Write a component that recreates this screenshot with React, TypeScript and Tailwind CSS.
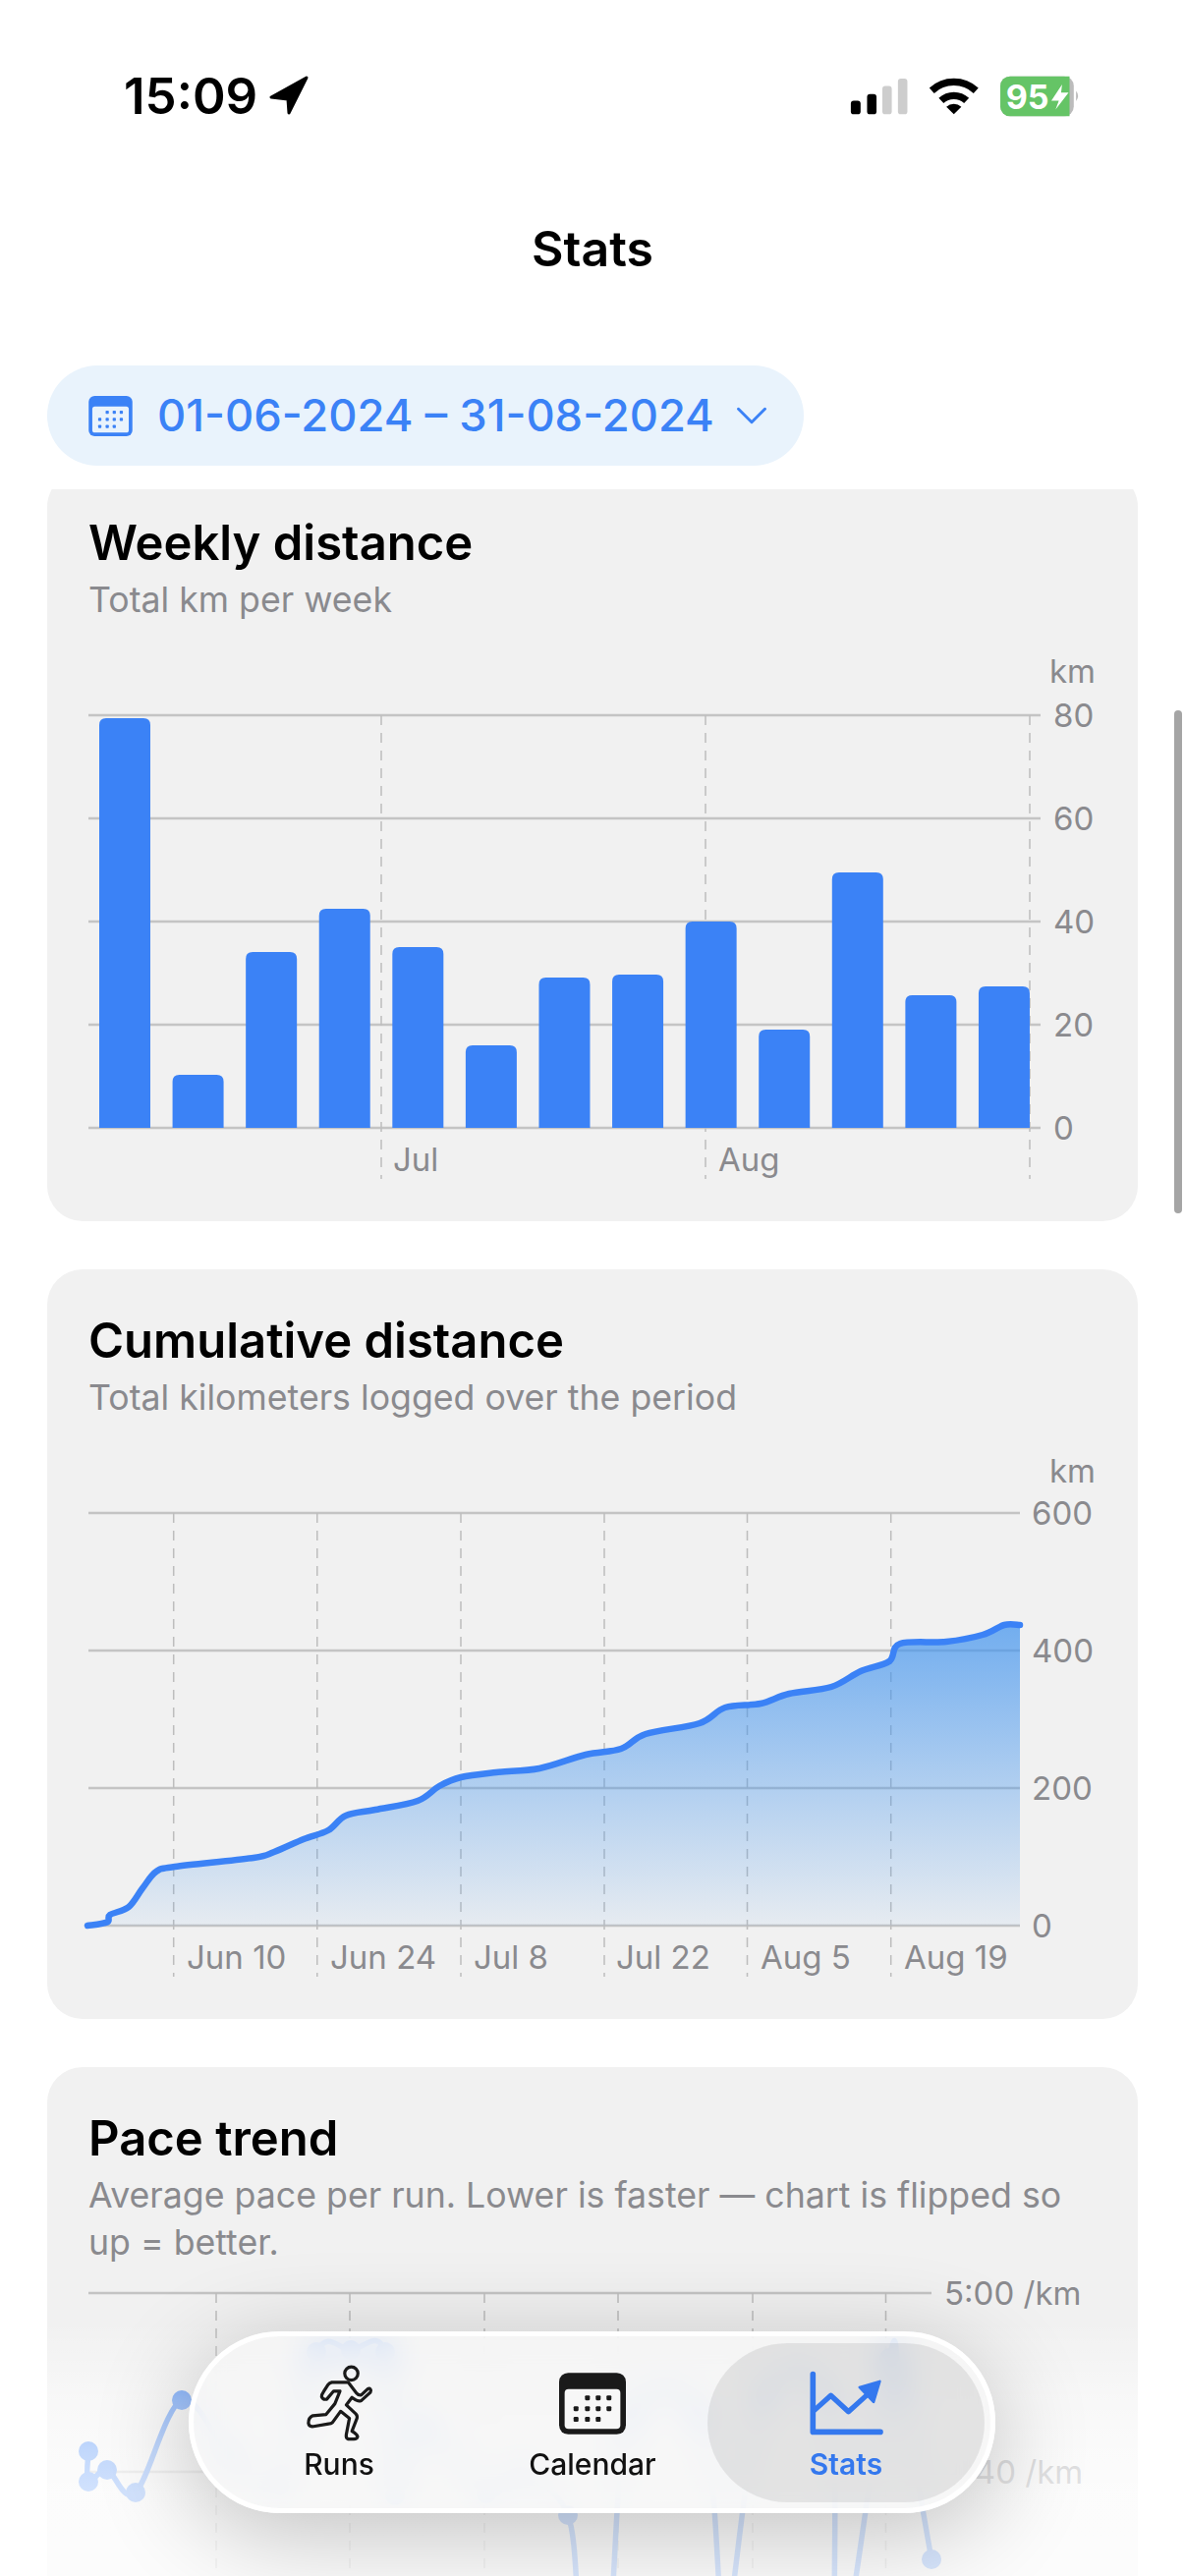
import { ChevronDown } from "lucide-react";

type Pt = [number, number];

const GRID = "#c4c4c4";
const DASH = "#bdbdbd";
const LABEL = "#8a8a8e";
const BLUE = "#3b82f6";

/** Catmull-Rom through the points, gives the soft line swift charts draws. */
function smooth(pts: Pt[]) {
  let d = `M${pts[0][0]} ${pts[0][1]}`;
  for (let i = 0; i < pts.length - 1; i++) {
    const a = pts[Math.max(i - 1, 0)];
    const b = pts[i];
    const c = pts[i + 1];
    const e = pts[Math.min(i + 2, pts.length - 1)];
    const c1x = b[0] + (c[0] - a[0]) / 6;
    const c1y = b[1] + (c[1] - a[1]) / 6;
    const c2x = c[0] - (e[0] - b[0]) / 6;
    const c2y = c[1] - (e[1] - b[1]) / 6;
    d += ` C${c1x} ${c1y} ${c2x} ${c2y} ${c[0]} ${c[1]}`;
  }
  return d;
}

const weeklyTops = [731, 1094, 969, 925, 964, 1064, 995, 992, 938, 1048, 888, 1013, 1004];

const cumulative: Pt[] = [
  [89, 1960], [109, 1956.5], [112, 1949], [131, 1941], [145, 1922], [159, 1905], [178, 1900],
  [258, 1891], [279, 1885], [309, 1872], [334, 1863], [352, 1848], [382, 1842], [425, 1833],
  [447, 1818], [469, 1809], [505, 1804], [549, 1800], [596, 1786], [632, 1780], [657, 1765],
  [712, 1754], [738, 1738], [774, 1734], [803, 1724], [846, 1717], [876, 1701], [905, 1691],
  [916, 1673], [963, 1671], [1000, 1664], [1022, 1654], [1038, 1654],
];

const pace: Pt[] = [
  [90, 2495], [90, 2526], [109, 2514], [138, 2537], [185, 2443], [235, 2500], [285, 2530],
  [322, 2394], [357, 2392], [392, 2394], [402, 2540], [430, 2470], [495, 2538], [530, 2520], [578, 2560],
  [592, 2680], [619, 2680], [641, 2460], [713, 2460], [735, 2680], [740, 2680], [778, 2440],
  [843, 2440], [850, 2680], [862, 2680], [905, 2400], [917, 2433], [948, 2605],
];

function Label({ x, y, children }: { x: number; y: number; children: React.ReactNode }) {
  return (
    <text x={x} y={y} dominantBaseline="central" fill={LABEL} fontSize={33}>
      {children}
    </text>
  );
}

function HLine({ y, x2 }: { y: number; x2: number }) {
  return <line x1={90} x2={x2} y1={y} y2={y} stroke={GRID} strokeWidth={2.5} />;
}

function VDash({ x, y1, y2 }: { x: number; y1: number; y2: number }) {
  return <line x1={x} x2={x} y1={y1} y2={y2} stroke={DASH} strokeWidth={1.5} strokeDasharray="10 8" />;
}

function WeeklyChart() {
  return (
    <svg viewBox="90 647 1024 553" className="block h-[553px] w-[1024px] overflow-visible">
      <Label x={1068} y={683}>km</Label>
      {[728, 833, 938, 1043, 1148].map((y) => <HLine key={y} y={y} x2={1059} />)}
      {[388, 718, 1048].map((x) => <VDash key={x} x={x} y1={728} y2={1200} />)}
      {weeklyTops.map((top, i) => {
        const x = 101 + i * 74.58;
        return (
          <path
            key={i}
            d={`M${x} 1148 V${top + 7} Q${x} ${top} ${x + 7} ${top} H${x + 45} Q${x + 52} ${top} ${x + 52} ${top + 7} V1148 Z`}
            fill={BLUE}
          />
        );
      })}
      <Label x={1072} y={728}>80</Label>
      <Label x={1072} y={833}>60</Label>
      <Label x={1072} y={938}>40</Label>
      <Label x={1072} y={1043}>20</Label>
      <Label x={1072} y={1148}>0</Label>
      <Label x={400} y={1180}>Jul</Label>
      <Label x={731} y={1180}>Aug</Label>
    </svg>
  );
}

function CumulativeChart() {
  const line = smooth(cumulative);
  return (
    <svg viewBox="90 1459 1024 553" className="block h-[553px] w-[1024px] overflow-visible">
      <defs>
        <linearGradient id="area" x1="0" y1="0" x2="0" y2="1">
          <stop offset="0" stopColor="#4093ee" stopOpacity={0.72} />
          <stop offset="1" stopColor="#4093ee" stopOpacity={0.06} />
        </linearGradient>
      </defs>
      <Label x={1068} y={1497}>km</Label>
      {[1540, 1680, 1820, 1960].map((y) => <HLine key={y} y={y} x2={1038} />)}
      {[176.7, 322.8, 469, 615, 760.5, 906.7].map((x) => <VDash key={x} x={x} y1={1540} y2={2012} />)}
      <path d={`${line} V1960 H89 Z`} fill="url(#area)" />
      <path d={line} fill="none" stroke={BLUE} strokeWidth={6.5} strokeLinecap="round" strokeLinejoin="round" />
      <Label x={1050} y={1540}>600</Label>
      <Label x={1050} y={1680}>400</Label>
      <Label x={1050} y={1820}>200</Label>
      <Label x={1050} y={1960}>0</Label>
      <Label x={190} y={1992}>Jun 10</Label>
      <Label x={336} y={1992}>Jun 24</Label>
      <Label x={482} y={1992}>Jul 8</Label>
      <Label x={627} y={1992}>Jul 22</Label>
      <Label x={774} y={1992}>Aug 5</Label>
      <Label x={920} y={1992}>Aug 19</Label>
    </svg>
  );
}

function PaceChart() {
  return (
    <svg viewBox="90 2319 1024 400" className="block h-[400px] w-[1024px] overflow-visible">
      <HLine y={2334} x2={948} />
      <HLine y={2516} x2={948} />
      {[220, 356, 493, 629, 766, 901.5].map((x) => <VDash key={x} x={x} y1={2334} y2={2700} />)}
      <path d={smooth(pace)} fill="none" stroke={BLUE} strokeWidth={5.5} strokeLinejoin="round" />
      {pace.filter((p) => p[1] < 2650).map((p, i) => <circle key={i} cx={p[0]} cy={p[1]} r={10} fill={BLUE} />)}
      <Label x={961} y={2334}>5:00 /km</Label>
      <Label x={961} y={2516}>4:40 /km</Label>
    </svg>
  );
}

function Card({ title, subtitle, children }: { title: string; subtitle: string; children: React.ReactNode }) {
  return (
    <section className="shrink-0 rounded-[36px] bg-[#f1f1f1] px-[42px] pt-[43px] pb-[43px]">
      <h2 className="h-[60px] text-[49px] leading-[60px] font-semibold text-black">{title}</h2>
      <p className="mt-[3px] text-[35.7px] leading-[48px] text-[#8a8a8e]">{subtitle}</p>
      <div className="mt-[13px]">{children}</div>
    </section>
  );
}

function CalendarIcon({ className, panel }: { className: string; panel: string }) {
  const dots: Pt[] = [
    [1257, 235], [1290, 235], [1323, 235],
    [1222, 268], [1257, 268], [1290, 268], [1323, 268],
    [1222, 301], [1257, 301], [1290, 301],
  ];
  return (
    <svg viewBox="1170 158 205 189" className={className} fill="currentColor">
      <rect x={1170} y={158} width={205} height={189} rx={28} />
      <rect x={1187} y={208} width={171} height={122} rx={12} className={panel} />
      {dots.map((d) => <rect key={d.join()} x={d[0] - 7.5} y={d[1] - 7.5} width={15} height={15} rx={3.5} />)}
    </svg>
  );
}

function RunsIcon() {
  return (
    <svg viewBox="385 132 215 248" className="h-[80px] w-[69px]" fill="none" stroke="#1a1a1a" strokeWidth={10} strokeLinejoin="round" strokeLinecap="round">
      <circle cx={530} cy={162} r={21} />
      <path d="M468 190 H520 L546 224 Q552 232 562 230 L582 211 Q590 206 592 216 Q592 222 586 226 L562 248 Q552 252 544 246 L532 238 L514 262 L544 290 Q550 296 548 304 L532 345 Q548 354 550 362 Q548 370 538 370 H520 Q512 368 514 356 L524 304 L496 282 L470 318 Q466 322 458 322 L410 330 Q396 332 394 320 Q394 302 408 296 L450 292 L478 258 L494 218 H474 L452 244 Q440 246 436 236 Q436 228 442 220 L456 198 Q460 192 468 190 Z" />
    </svg>
  );
}

function StatsIcon() {
  return (
    <svg viewBox="370 155 232 200" className="h-[67px] w-[77px]" fill="none" stroke="#3478ee" strokeLinecap="round" strokeLinejoin="round">
      <path d="M383 165 V342 H590" strokeWidth={17} />
      <path d="M388 275 L438 230 L492 280 L545 232" strokeWidth={16} />
      <path d="M526 205 L588 187 L569 250 Z" fill="#3478ee" strokeWidth={8} />
    </svg>
  );
}

function Tab({ label, active = false, children }: { label: string; active?: boolean; children: React.ReactNode }) {
  return (
    <div className={"flex flex-col items-center rounded-[81px] pt-[21px] " + (active ? "-mx-3 bg-black/[.08]" : "")}>
      <div className="flex h-[80px] items-center justify-center">{children}</div>
      <span className={"mt-[4px] text-[30px] leading-[36px] " + (active ? "font-semibold text-[#3478ee]" : "font-medium text-[#111]")}>{label}</span>
    </div>
  );
}

function StatusIcons() {
  return (
    <svg viewBox="135 75 705 130" className="h-[43px] w-[235px]">
      <rect x={135} y={155} width={30} height={42} rx={9} fill="#000" />
      <rect x={185} y={135} width={29} height={62} rx={9} fill="#000" />
      <rect x={232} y={110} width={29} height={87} rx={9} fill="#cdcdcd" />
      <rect x={280} y={87} width={29} height={110} rx={9} fill="#cdcdcd" />
      <g fill="none" stroke="#000" strokeWidth={22}>
        <path d="M384 124 A100 100 0 0 1 520 124" />
        <path d="M413 155 A57 57 0 0 1 491 155" />
      </g>
      <path d="M452 197 L429 174 A33 33 0 0 1 475 174 Z" fill="#000" />
      <rect x={595} y={80} width={226} height={123} rx={30} fill="#bcbcbc" />
      <path d="M828 125 Q840 140 828 157 Z" fill="#bcbcbc" />
      <path d="M625 80 H808 V203 H625 A30 30 0 0 1 595 173 V110 A30 30 0 0 1 625 80 Z" fill="#65c466" />
      <text x={612} y={180} fontSize={103} fontWeight={700} fill="#fff">95</text>
      <path d="M785 105 L752 155 H775 L765 182 L805 130 H782 Z" fill="#fff" />
    </svg>
  );
}

export default function App() {
  return (
    <div className="relative flex h-[2622px] w-[1206px] flex-col overflow-hidden bg-white font-['Inter',sans-serif]">
      <header className="flex h-[194px] shrink-0 items-center justify-between pr-[106px] pl-[126px]">
        <div className="flex items-center gap-[9px]">
          <span className="text-[51px] leading-none font-semibold text-black">15:09</span>
          <svg viewBox="270 76 45 44" className="h-[44px] w-[45px]" fill="#000" stroke="#000" strokeWidth={3} strokeLinejoin="round">
            <path d="M311 80 L275 100 L292 102 L293 116 Z" />
          </svg>
        </div>
        <StatusIcons />
      </header>

      <h1 className="h-[118px] shrink-0 text-center text-[50px] leading-[118px] font-semibold text-black">Stats</h1>

      <button className="mt-[60px] ml-[48px] flex h-[102px] w-[770px] shrink-0 items-center rounded-full bg-[#e9f3fc] pl-[42px] text-[#3b82f6]">
        <CalendarIcon className="h-[41px] w-[45px]" panel="fill-[#e9f3fc]" />
        <span className="ml-[25px] text-[45.3px] leading-none font-medium whitespace-nowrap">01-06-2024 – 31-08-2024</span>
        <ChevronDown className="ml-[11px] h-[54px] w-[54px]" strokeWidth={1.3} />
      </button>

      <main className="mt-[24px] flex min-h-0 flex-1 flex-col overflow-hidden px-[48px]">
        <div className="-mt-[18px] flex flex-col gap-[49px]">
          <Card title="Weekly distance" subtitle="Total km per week"><WeeklyChart /></Card>
          <Card title="Cumulative distance" subtitle="Total kilometers logged over the period"><CumulativeChart /></Card>
          <Card title="Pace trend" subtitle="Average pace per run. Lower is faster — chart is flipped so up = better."><PaceChart /></Card>
        </div>
      </main>

      <div className="absolute top-[723px] left-[1195px] h-[512px] w-[8px] rounded-full bg-[#a5a5a5]" />

      <div className="absolute inset-x-0 bottom-0 h-[259px] bg-[linear-gradient(to_bottom,rgba(255,255,255,0)_0%,rgba(255,255,255,0.5)_31%,rgba(255,255,255,0.69)_51%,rgba(255,255,255,0.77)_67%,rgba(255,255,255,0.8)_100%)]" />

      <nav className="absolute bottom-[64px] left-[192px] grid h-[185px] w-[821px] grid-cols-[258px_258px_258px] rounded-full border-[5px] border-white bg-[#f5f5f5]/75 pt-[7px] pb-[6px] pl-[19px] shadow-[0_20px_100px_rgba(0,0,0,0.24)] backdrop-blur-[16px]">
        <Tab label="Runs"><RunsIcon /></Tab>
        <Tab label="Calendar"><CalendarIcon className="h-[63px] w-[68px] text-[#1a1a1a]" panel="fill-[#f7f7f7]" /></Tab>
        <Tab label="Stats" active><StatsIcon /></Tab>
      </nav>
    </div>
  );
}
